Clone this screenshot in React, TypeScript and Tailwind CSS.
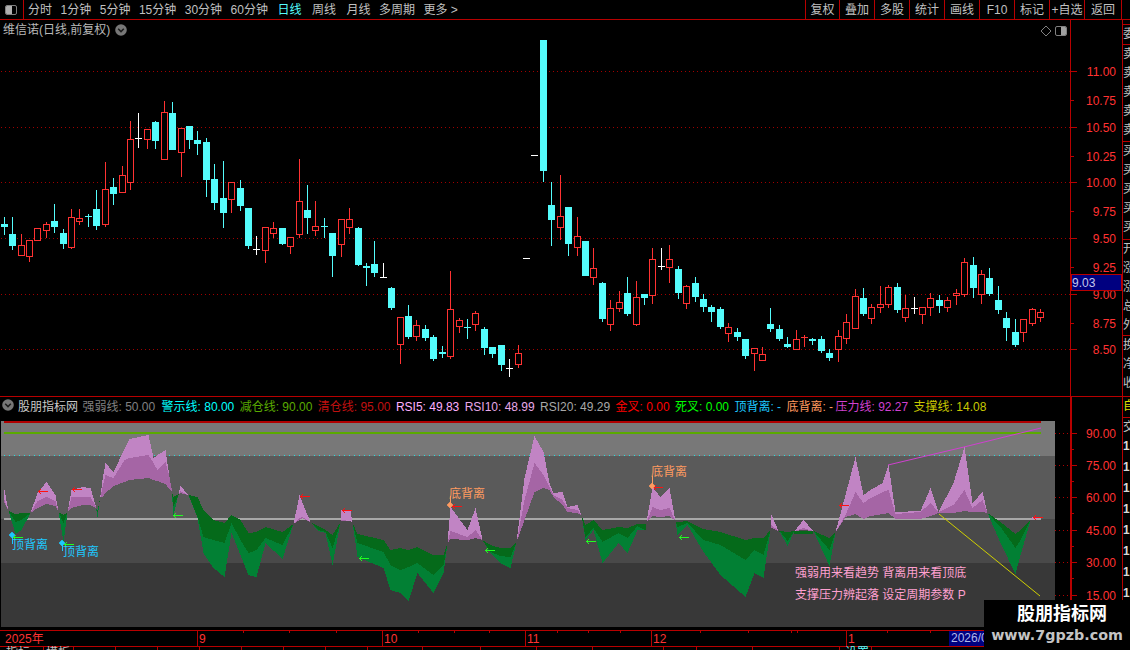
import React from "react";

type C = [number, number, number, number, number, string];
const RED = "#ff3232";
const CYAN = "#54fcfc";
const LINE = "#b80000";

const group = (ox: number, oy: number, rows: C[]): C[] =>
  rows.map(([x, a, b, c, d, t]) => [Math.round(ox + x / 3 - 0.5), Math.round(oy + a / 3), Math.round(oy + b / 3), Math.round(oy + c / 3), Math.round(oy + d / 3), t]);

const candles: C[] = [
  ...group(0, 90, [
    [13,381,435,402,411,"c"],[37,381,480,432,468,"c"],[64,432,495,466,494,"r"],[88,450,516,451,497,"r"],[112,415,450,415,449,"r"],[139,397,444,403,419,"r"],[163,342,429,393,411,"c"],[190,417,477,429,462,"c"],[214,357,477,382,470,"r"],[238,357,405,385,392,"r"],[265,372,411,378,381,"c"],[289,300,420,357,408,"c"],[316,216,411,298,401,"r"],[340,264,345,291,312,"c"],[367,228,305,256,305,"r"],[391,93,300,148,275,"r"],[415,69,174,144,147,"w"],[442,118,177,118,146,"r"],[466,93,177,96,153,"c"],[493,33,207,67,206,"r"],[517,36,180,69,180,"c"],[544,115,261,115,185,"r"],[568,108,177,108,150,"c"],[592,123,195,150,162,"c"],[619,144,321,156,270,"c"],[643,222,360,267,339,"c"],[670,213,414,324,369,"c"],[694,277,369,277,326,"r"],[721,270,363,294,348,"c"],[745,354,477,354,468,"c"],[769,438,495,477,480,"w"],[796,411,519,412,479,"r"],
  ]),
  ...group(270, 150, [
    [10,216,264,235,250,"r"],[37,234,285,234,282,"c"],[61,262,312,262,287,"r"],[88,27,264,154,251,"r"],[112,105,252,180,204,"c"],[136,153,258,229,239,"r"],[163,204,264,228,231,"c"],[187,249,381,249,318,"c"],[214,208,321,208,281,"r"],[238,174,252,208,230,"r"],[265,231,348,234,345,"c"],[289,339,408,348,354,"c"],[313,273,381,342,369,"c"],[340,339,384,381,384,"w"],[364,411,480,414,474,"c"],[391,502,642,502,581,"r"],[415,465,567,498,561,"c"],[439,510,573,526,557,"r"],[466,525,573,537,564,"c"],[490,555,633,561,627,"c"],[517,588,624,606,612,"c"],[541,363,627,478,617,"r"],[568,504,549,511,527,"r"],[592,507,567,531,534,"c"],[616,483,543,490,521,"r"],[643,531,615,537,594,"c"],[667,591,624,591,612,"c"],[694,585,663,585,645,"c"],[718,627,681,654,657,"w"],[745,585,654,610,641,"r"],
  ]),
  ...group(520, 30, [
    [18,685,685,684,687,"w"],[42,376,376,375,378,"w"],[70,30,456,30,423,"c"],[94,456,648,525,570,"c"],[121,435,630,559,590,"r"],[145,531,678,531,642,"c"],[172,561,678,619,650,"r"],[196,633,738,633,738,"c"],[220,654,765,715,740,"r"],[247,756,876,759,867,"c"],[271,810,903,835,881,"r"],[298,783,846,817,833,"r"],[322,741,858,789,852,"c"],[349,753,888,802,881,"r"],[373,792,825,792,804,"c"],[397,654,822,688,795,"r"],[424,654,720,708,711,"w"],[448,645,759,688,710,"r"],[475,708,807,717,789,"c"],[499,765,837,769,818,"r"],[526,741,816,759,801,"c"],[550,792,846,807,831,"c"],[574,825,876,831,846,"c"],[601,831,897,837,891,"c"],[625,879,936,892,908,"r"],[652,894,933,906,921,"c"],[676,927,987,927,978,"c"],[703,955,1023,955,968,"r"],[727,951,993,973,989,"r"],[751,834,906,882,897,"c"],[778,885,933,897,927,"c"],[802,921,954,942,951,"c"],[829,900,957,928,957,"r"],
  ]),
  ...group(800, 240, [
    [13,285,321,291,294,"r"],[37,294,315,297,303,"c"],[64,288,339,297,333,"c"],[88,327,363,339,354,"c"],[115,270,366,289,326,"r"],[139,222,312,247,294,"r"],[166,147,267,169,264,"r"],[190,144,228,174,222,"c"],[214,192,252,202,233,"r"],[241,138,219,193,200,"r"],[265,135,204,142,191,"r"],[292,129,219,141,210,"c"],[316,165,246,205,231,"r"],[342,171,222,204,207,"w"],[367,202,252,202,221,"r"],[391,160,228,175,200,"r"],[418,165,219,180,198,"c"],[442,171,216,181,200,"r"],[469,147,195,160,166,"r"],[493,54,171,67,163,"r"],[520,51,174,75,144,"c"],[544,90,192,103,163,"r"],[568,84,168,114,162,"c"],[595,138,222,180,210,"c"],[619,216,303,234,264,"c"],[646,237,321,276,315,"c"],[670,238,306,238,275,"r"],[697,204,258,208,248,"r"],[721,207,246,217,230,"r"],
  ]),
];

const Candle = ({ c }: { c: C }) => {
  const [x, wt, wb, bt, bb, t] = c;
  const col = t === "r" ? RED : t === "c" ? CYAN : "#ffffff";
  const h = bb - bt;
  if (wt === wb) return <rect x={x - 3} y={bt} width={7} height={1} fill={col} />;
  return (
    <g>
      <rect x={x} y={wt} width={1} height={wb - wt} fill={col} />
      {h <= 1 ? (
        <rect x={x - 3} y={bt} width={7} height={1} fill={col} />
      ) : t === "r" ? (
        <rect x={x - 2.5} y={bt + 0.5} width={6} height={h} fill="#000" stroke={col} strokeWidth={1} />
      ) : (
        <rect x={x - 3} y={bt} width={7} height={h} fill={col} />
      )}
    </g>
  );
};

const keys: number[][] = [
  [4,490,500,503],[8,511,511,511],[15,534,522,514],[21,530,520,513],[30,513,513,513],[37,493,501,508],[46,482,497,504],[55,495,501,506],[58,512,512,512],[63,542,523,515],[67,512,512,512],[71,490,497,508],[82,487,497,505],[90,488,497,505],[95,505,506,508],[97,517,512,510],[100,495,497,497],[102,480,487,497],[105,463,475,493],[113,472,478,486],[124,449,460,482],[129,439,458,480],[148,435,455,478],[153,458,463,480],[157,455,470,481],[165,450,462,484],[169,477,477,489],[171,488,488,491],[173,515,506,497],[180,486,491,493],[188,495,495,495],[197,518,517,497],[203,553,537,510],[213,568,540,520],[224,577,543,523],[231,533,523,515],[240,555,540,520],[248,575,553,533],[256,577,550,532],[265,543,538,527],[282,559,545,532],[293,524,524,524],[299,495,518,520],[302,503,517,518],[310,522,522,522],[318,531,530,526],[325,533,532,530],[332,565,548,535],[340,522,522,522],[341,510,520,521],[350,510,521,521],[352,523,523,523],[357,557,543,534],[383,568,552,540],[390,590,565,550],[400,593,570,548],[408,601,567,550],[417,573,563,547],[433,593,575,555],[443,573,565,555],[447,543,543,543],[450,507,531,539],[467,530,537,540],[475,508,530,538],[482,540,540,540],[490,553,552,545],[500,563,556,548],[510,568,557,548],[516,542,542,542],[524,478,500,520],[534,436,463,492],[543,452,475,488],[549,483,487,490],[553,493,495,497],[562,492,500,505],[567,507,508,512],[577,505,510,513],[581,515,515,515],[585,540,537,525],[593,530,528,520],[602,563,542,530],[618,543,533,527],[627,553,538,528],[637,530,526,524],[645,530,530,524],[646,522,522,522],[652,487,507,516],[660,497,510,517],[669,488,508,516],[675,521,521,521],[677,535,527,522],[687,525,523,521],[703,552,540,529],[720,575,545,532],[745,597,560,540],[754,573,550,538],[763,578,555,538],[770,530,530,530],[771,515,525,528],[778,531,531,531],[780,533,532,531],[787,546,541,532],[794,531,531,531],[803,520,528,530],[813,531,531,531],[829,566,550,538],[835,532,532,532],[845,495,515,517],[855,457,492,514],[863,495,503,519],[870,490,498,516],[882,483,492,514],[888,465,490,513],[895,512,514,519],[920,511,512,519],[930,488,503,516],[938,512,512,513],[953,483,505,513],[964,447,490,511],[972,503,508,512],[982,492,500,512],[987,513,513,513],[1000,543,527,522],[1015,574,548,534],[1020,555,540,530],[1030,520,520,520],[1032,517,519,519],[1040,519,519,519],
];

function ribbons() {
  const p = { pl: "", pd: "", gl: "", gd: "M794 531H813V534H794z" };
  let k = 0;
  const col = (x: number, a: number, b: number, key: "pl" | "pd" | "gl" | "gd") => {
    const t = Math.round(Math.min(a, b));
    const e = Math.round(Math.max(a, b));
    if (e > t) p[key] += `M${x} ${t}h1V${e}h-1z`;
  };
  for (let x = 4; x <= 1040; x++) {
    while (keys[k + 1] && keys[k + 1][0] <= x) k++;
    const A = keys[k];
    const B = keys[k + 1] ?? A;
    const f = B[0] === A[0] ? 0 : (x - A[0]) / (B[0] - A[0]);
    const y5 = A[1] + (B[1] - A[1]) * f;
    const y10 = A[2] + (B[2] - A[2]) * f;
    const y20 = A[3] + (B[3] - A[3]) * f;
    col(x, y5, y10, y5 < y10 ? "pl" : "gl");
    col(x, y10, y20, y10 < y20 ? "pd" : "gd");
  }
  return p;
}
const rb = ribbons();

const Arrow = ({ x, y, c }: { x: number; y: number; c: string }) => (
  <g fill={c}>
    <rect x={x} y={y} width={10} height={1} />
    <rect x={x + 1} y={y - 1} width={1} height={3} />
    <rect x={x + 2} y={y - 2} width={1} height={1} />
    <rect x={x + 2} y={y + 2} width={1} height={1} />
  </g>
);

const Marker = ({ x, y, c }: { x: number; y: number; c: string }) => (
  <polygon points={`${x},${y - 3} ${x + 3},${y} ${x},${y + 3} ${x - 3},${y}`} fill={c} stroke={c} strokeWidth={0.6} />
);

const PriceChart = () => (
  <svg width={1070} height={376} viewBox="0 20 1070 376" className="block" shapeRendering="crispEdges">
    {[71, 127, 182, 238, 294, 349].map((y) => (
      <line key={y} x1={1} x2={1070} y1={y + 0.5} y2={y + 0.5} stroke="#a00000" strokeDasharray="1 3" />
    ))}
    {candles.map((c, i) => (
      <Candle key={i} c={c} />
    ))}
  </svg>
);

const IndicatorChart = () => (
  <svg width={1070} height={206} viewBox="0 421 1070 206" className="block">
    <g shapeRendering="crispEdges">
      <rect x={1} y={421} width={1054} height={35} fill="#787878" />
      <rect x={1} y={456} width={1054} height={63} fill="#5a5a5a" />
      <rect x={1} y={519} width={1054} height={44} fill="#494949" />
      <rect x={1} y={563} width={1054} height={64} fill="#383838" />
      <rect x={4} y={518} width={1037} height={2} fill="#a8a8a8" />
      <rect x={4} y={432} width={1037} height={2} fill="#5aaa00" />
      <rect x={4} y={421} width={1037} height={2} fill="#b00000" />
      <line x1={4} x2={1041} y1={455.5} y2={455.5} stroke="#22e0e0" strokeDasharray="1 4" />
      {[433, 465, 497, 530, 562, 595].map((y) => (
        <line key={y} x1={1055} x2={1070} y1={y + 0.5} y2={y + 0.5} stroke="#b00000" strokeDasharray="1 3" />
      ))}
      <path d={rb.pl} fill="#c184c4" />
      <path d={rb.pd} fill="#a565a5" />
      <path d={rb.gd} fill="#056a1a" />
      <path d={rb.gl} fill="#028034" />
      {[[38,491],[72,489],[300,496],[342,510],[452,506],[653,487],[839,505],[1033,517]].map(([x, y]) => (
        <Arrow key={x} x={x} y={y} c="#ff1010" />
      ))}
      {[[13,537],[64,544],[173,515],[359,558],[485,550],[586,541],[679,537]].map(([x, y]) => (
        <Arrow key={x} x={x} y={y} c="#20ff20" />
      ))}
    </g>
    <polyline points="888,465 964,447 1041,428" fill="none" stroke="#d040d0" strokeWidth={1} />
    <polyline points="939,514 1040,596" fill="none" stroke="#d0d000" strokeWidth={1} />
    <g fontSize={12}>
      <line x1={12.5} x2={12.5} y1={535} y2={544} stroke="#1ec8ff" />
      <line x1={62.5} x2={62.5} y1={543} y2={551} stroke="#1ec8ff" />
      <Marker x={12} y={535} c="#1ec8ff" />
      <Marker x={62} y={543} c="#1ec8ff" />
      <text x={12} y={549} fill="#1ec8ff">顶背离</text>
      <text x={63} y={556} fill="#1ec8ff">顶背离</text>
      <line x1={450.5} x2={450.5} y1={496} y2={505} stroke="#ff9a60" />
      <line x1={652.5} x2={652.5} y1={476} y2={486} stroke="#ff9a60" />
      <Marker x={450} y={505} c="#ff9a60" />
      <Marker x={652} y={486} c="#ff9a60" />
      <text x={449} y={498} fill="#ff9a60">底背离</text>
      <text x={651} y={476} fill="#ff9a60">底背离</text>
      <text x={795} y={577} fill="#ffa0d0">强弱用来看趋势 背离用来看顶底</text>
      <text x={795} y={599} fill="#ffa0d0">支撑压力辨起落 设定周期参数 P</text>
    </g>
  </svg>
);

const months: [number, string][] = [[197, "9"], [382, "10"], [525, "11"], [651, "12"], [846, "1"]];
const minor = [243, 289, 336, 418, 454, 489, 557, 588, 620, 700, 748, 791, 797, 887, 930];
const lowDiv = [43, 73, 115, 157, 199, 241, 283, 325, 367, 422, 480, 536, 592, 663, 696, 752, 839, 871];

const TimeAxis = () => (
  <svg width={1070} height={23} viewBox="0 627 1070 23" className="block">
    <g shapeRendering="crispEdges">
      <rect x={0} y={630} width={1070} height={1} fill={LINE} />
      <rect x={0} y={646} width={1070} height={1} fill={LINE} />
      {months.map(([x]) => (
        <rect key={x} x={x} y={630} width={1} height={16} fill={LINE} />
      ))}
      {minor.map((x) => (
        <rect key={x} x={x} y={631} width={1} height={2} fill={LINE} />
      ))}
      {lowDiv.map((x) => (
        <rect key={x} x={x} y={647} width={1} height={3} fill={LINE} />
      ))}
      <rect x={949} y={631} width={40} height={15} fill="#000080" />
    </g>
    <g fontSize={12}>
      <text x={5} y={643} fill={RED}>2025年</text>
      {months.map(([x, t]) => (
        <text key={x} x={x + 2} y={643} fill={RED}>{t}</text>
      ))}
      <text x={951} y={642} fill="#b0b8e8">2026/01</text>
      <text x={6} y={657} fill="#c0c0c0">指标</text>
      <text x={46} y={657} fill="#c0c0c0">模板</text>
      <text x={845} y={657} fill={CYAN}>设置</text>
    </g>
  </svg>
);

const priceAxis: [string, number][] = [["11.00",71],["10.75",100],["10.50",127],["10.25",156],["10.00",182],["9.75",211],["9.50",238],["9.25",267],["9.00",294],["8.75",323],["8.50",349]];
const MAJOR = ["11.00", "10.50", "10.00", "9.50", "9.00", "8.50"];

const PriceAxis = () => (
  <svg width={51} height={376} viewBox="1071 20 51 376" className="block">
    <g shapeRendering="crispEdges">
      {priceAxis.map(([t, y]) => (
        <rect key={t} x={1071} y={y} width={MAJOR.includes(t) ? 6 : 3} height={1} fill={LINE} />
      ))}
    </g>
    <g fontSize={12} textAnchor="end" fill={RED}>
      {priceAxis.map(([t, y]) => (
        <text key={t} x={1116} y={y + 5}>{t}</text>
      ))}
    </g>
    <rect x={1071} y={274.5} width={50.5} height={16} fill="#000080" stroke={LINE} shapeRendering="crispEdges" />
    <text x={1072} y={287} fontSize={12} fill="#c4c8ec">9.03</text>
  </svg>
);

const indAxis: [string, number][] = [["90.00",433],["75.00",465],["60.00",497],["45.00",530],["30.00",562],["15.00",595]];
const IndAxis = () => (
  <svg width={51} height={253} viewBox="1071 397 51 253" className="block">
    <g shapeRendering="crispEdges" fill={LINE}>
      <rect x={1071} y={397} width={1} height={253} />
      {indAxis.map(([t, y]) => (
        <g key={t}>
          <rect x={1071} y={y} width={6} height={1} />
          <rect x={1071} y={y + 16} width={3} height={1} />
        </g>
      ))}
    </g>
    <g fontSize={12} textAnchor="end" fill={RED}>
      {indAxis.map(([t, y]) => (
        <text key={t} x={1116} y={y + 5}>{t}</text>
      ))}
    </g>
  </svg>
);

const PaneIcon = ({ right }: { right?: boolean }) => (
  <div className="flex h-[10px] w-[12px] justify-end overflow-hidden rounded-[2px] border border-[#808080] bg-black">
    <div className={right ? "w-[5px] bg-[#a0a0a0]" : "mr-auto w-[6px] bg-[#b0b0b0]"} />
  </div>
);

const Chevron = ({ className }: { className: string }) => (
  <svg viewBox="0 0 12 12" className={className}>
    <circle cx={6} cy={6} r={5.8} fill="#777777" />
    <path d="M3.2 4.8 6 7.6 8.8 4.8" fill="none" stroke="#1c1c1c" strokeWidth={1.5} />
  </svg>
);

const leftTabs: [string, string][] = [["分时",""],["1分钟",""],["5分钟",""],["15分钟",""],["30分钟",""],["60分钟",""],["日线","ml-[1px] text-[#54fcfc]"],["周线","ml-[2px]"],["月线","ml-[2px]"],["多周期",""],["更多 >",""]];
const rightTabs: [string, string][] = [["复权","w-[34px]"],["叠加","w-[35px]"],["多股","w-[35px]"],["统计","w-[35px]"],["画线","w-[35px]"],["F10","w-[35px]"],["标记","w-[35px]"],["+自选","w-[35px]"],["返回","w-[38px]"]];

const Toolbar = () => (
  <div className="flex h-[20px] items-center border-b border-[#b80000] text-[12px] text-[#c0c0c0]">
    <div className="flex h-full w-[24px] items-center justify-center border-r border-[#b80000] pr-[1px]">
      <PaneIcon />
    </div>
    <div className="ml-[4px] flex gap-[8.5px]">
      {leftTabs.map(([t, c]) => (
        <span key={t} className={c}>{t}</span>
      ))}
    </div>
    <div className="ml-auto mr-[8px] flex h-full">
      {rightTabs.map(([t, c]) => (
        <span key={t} className={`flex items-center justify-center border-l border-[#b80000] last:border-r ${c}`}>{t}</span>
      ))}
    </div>
  </div>
);

const legend: [string, string, string, string][] = [
  ["强弱线:", " 50.00", "text-[#808080]", ""],
  ["警示线:", " 80.00", "text-[#00ffff]", "ml-[1px]"],
  ["减仓线:", " 90.00", "text-[#5aaa00]", ""],
  ["清仓线:", " 95.00", "text-[#c01010]", ""],
  ["RSI5:", " 49.83", "text-[#ffb0ff]", ""],
  ["RSI10:", " 48.99", "text-[#e8a8e8]", ""],
  ["RSI20:", " 49.29", "text-[#a8a8a8]", ""],
  ["金叉:", " 0.00", "text-[#ff0000]", ""],
  ["死叉:", " 0.00", "text-[#00ff00]", ""],
  ["顶背离:", " -", "text-[#1ec8ff]", ""],
  ["底背离:", " -", "text-[#ff9a60]", ""],
  ["压力线:", " 92.27", "text-[#d040d0]", "ml-[-3px]"],
  ["支撑线:", " 14.08", "text-[#c8c800]", ""],
];

const IndicatorHeader = () => (
  <div className="flex h-[24px] items-start whitespace-pre pt-[1px] text-[12px]">
    <Chevron className="ml-[2px] mt-[1px] h-[12px] w-[12px]" />
    <span className="ml-[4px] w-[64.5px] text-[#c8c8c8]">股朋指标网</span>
    <div className="flex gap-[5.4px]">
      {legend.map(([a, b, c, d]) => (
        <span key={a} className={`${c} ${d}`}>{a + b}</span>
      ))}
    </div>
  </div>
);

const sideBlocks: [string[], number][] = [
  [["委"], 20],
  [["卖", "卖", "卖", "卖", "卖"], 97],
  [["买", "买", "买", "买", "买"], 98],
  [["开", "涨", "涨", "总", "外"], 96],
  [["换", "净", "收"], 61],
];

const Side = () => (
  <div className="flex w-[8px] flex-col overflow-hidden border-l border-[#b80000] text-[12px] leading-[19px] text-[#c0c0c0]">
    <div className="h-[5px] shrink-0 border-b border-[#b80000]" />
    {sideBlocks.map(([chars, h], i) => (
      <div key={i} style={{ height: h }} className="shrink-0 overflow-hidden border-b border-[#b80000]">
        {chars.map((c, j) => (
          <div key={j} className="h-[19px] w-[12px] overflow-hidden">{c}</div>
        ))}
      </div>
    ))}
    <div className="h-[21px] shrink-0 overflow-hidden border-b border-[#b80000] text-[#e0e000]">自</div>
    <div className="w-[12px]">交</div>
    {[0, 1, 2, 3, 4, 5, 6, 7].map((i) => (
      <div key={i} className="h-[21px] font-bold text-[#d8d8d8]">1</div>
    ))}
  </div>
);

export default function App() {
  return (
    <div className="relative flex h-[650px] w-[1130px] flex-col overflow-hidden bg-black font-['Liberation_Sans','Noto_Sans_CJK_SC',sans-serif] text-[12px]">
      <Toolbar />
      <div className="flex min-h-0 flex-1">
        <div className="flex w-[1122px] flex-col">
          <div className="flex h-[377px] border-b border-[#b80000]">
            <div className="relative w-[1070px]">
              <PriceChart />
              <div className="absolute left-[3px] top-[1px] flex items-center gap-[5px] text-[#b8b8b8]">
                <span>维信诺(日线,前复权)</span>
                <Chevron className="h-[12px] w-[12px]" />
              </div>
              <div className="absolute right-[3px] top-[5px] flex items-center gap-[3px]">
                <svg viewBox="0 0 12 12" className="h-[12px] w-[12px]">
                  <path d="M6 1 11 6 6 11 1 6Z" fill="none" stroke="#808080" />
                </svg>
                <PaneIcon right />
              </div>
            </div>
            <div className="w-[52px] border-l border-[#b80000]">
              <PriceAxis />
            </div>
          </div>
          <div className="flex h-[253px]">
            <div className="w-[1070px]">
              <IndicatorHeader />
              <IndicatorChart />
              <TimeAxis />
            </div>
            <div className="w-[52px] border-l border-[#b80000]">
              <IndAxis />
            </div>
          </div>
        </div>
        <Side />
      </div>
      <div className="absolute bottom-0 right-0 flex h-[50px] w-[146px] flex-col items-center bg-black font-['DejaVu_Sans','Noto_Sans_CJK_SC',sans-serif]">
        <span className="ml-[10px] mt-[2px] text-[18px] font-bold leading-[24px] text-white">股朋指标网</span>
        <span className="text-[14.3px] font-bold leading-[18px] text-[#c4c4c4]">www.7gpzb.com</span>
      </div>
    </div>
  );
}
